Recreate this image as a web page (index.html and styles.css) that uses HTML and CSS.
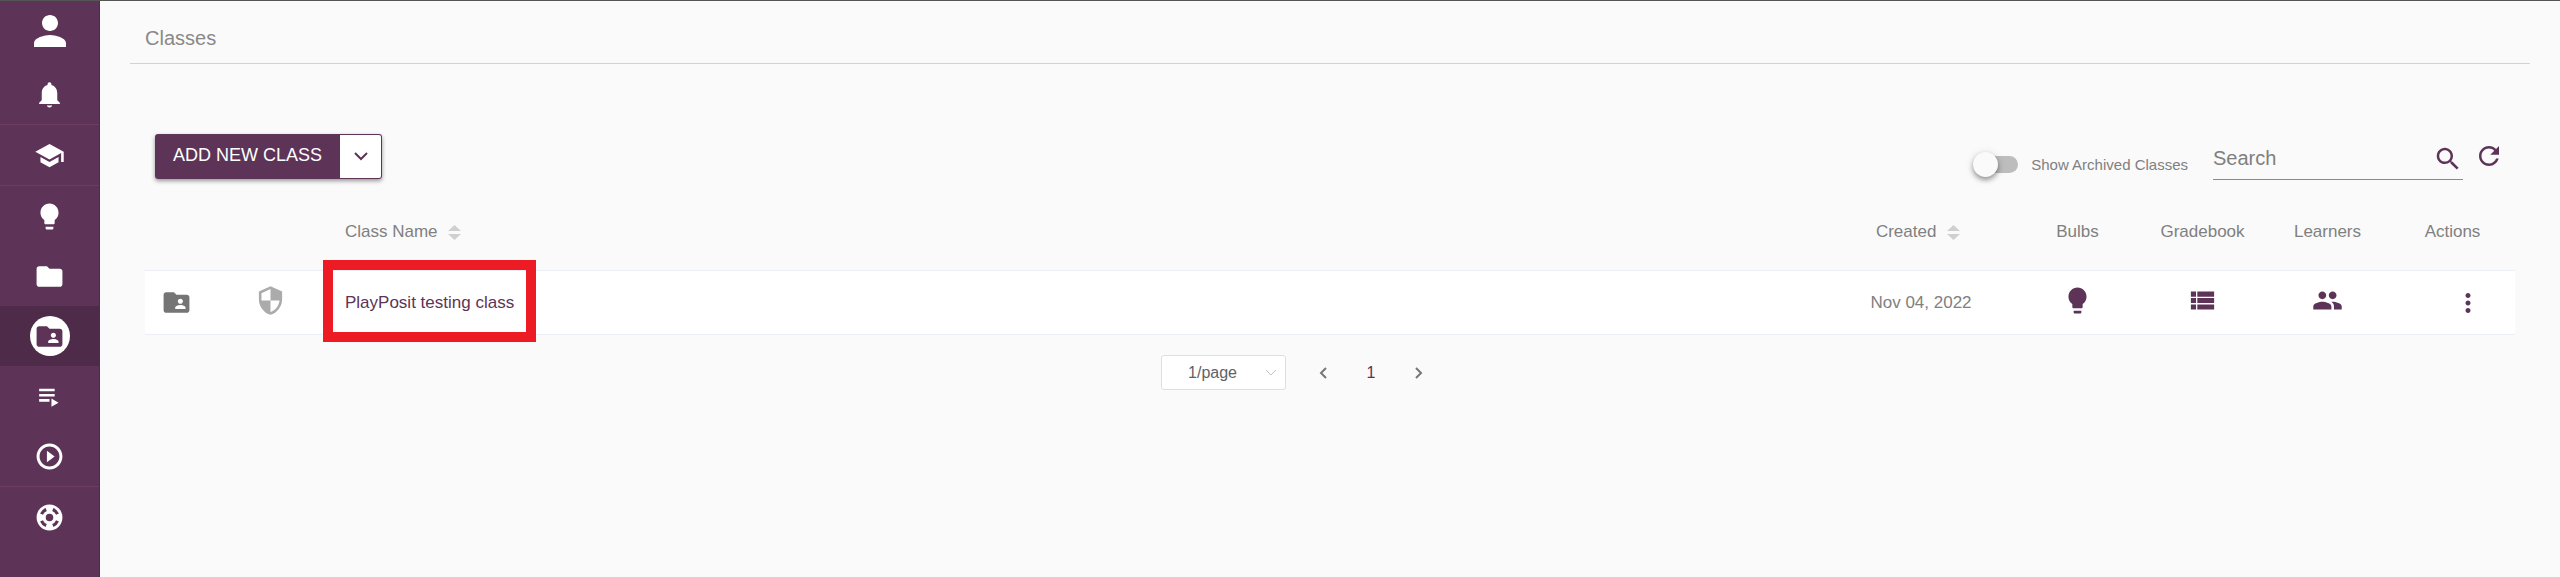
FILE: index.html
```
<!DOCTYPE html>
<html lang="en">

<head>
    <meta charset="UTF-8">
    <meta name="viewport" content="width=device-width, initial-scale=1.0">
    <title>Classes</title>
    <link rel="stylesheet" href="styles.css">
</head>

<body>
    <nav class="sidebar">
        <a class="nav-item nav-user" href="#" aria-label="Account">
            <svg class="icon-user" viewBox="0 0 24 24"><path d="M12 12c2.21 0 4-1.79 4-4s-1.79-4-4-4-4 1.79-4 4 1.79 4 4 4zm0 2c-2.67 0-8 1.34-8 4v2h16v-2c0-2.66-5.33-4-8-4z"/></svg>
        </a>
        <a class="nav-item divided" href="#" aria-label="Notifications">
            <svg class="icon" viewBox="0 0 24 24"><path d="M12 22c1.1 0 2-.7 2-1.4h-4c0 .7.89 1.4 2 1.4zm6-5.5V11c0-3.07-1.64-5.64-4.5-6.32V4c0-.83-.67-1.5-1.5-1.5s-1.5.67-1.5 1.5v.68C7.63 5.36 6 7.92 6 11v5.5l-2 1.8v1h16v-1z"/></svg>
        </a>
        <a class="nav-item divided" href="#" aria-label="Courses">
            <svg class="icon" viewBox="0 0 24 24"><path d="M5 13.18v4L12 21l7-3.82v-4L12 17l-7-3.82zM12 3L1 9l11 6 9-4.91V17h2V9L12 3z"/></svg>
        </a>
        <a class="nav-item" href="#" aria-label="Bulbs">
            <svg class="icon" viewBox="0 0 24 24"><path d="M9 21c0 .55.45 1 1 1h4c.55 0 1-.45 1-1v-1H9v1zm3-19C8.14 2 5 5.14 5 9c0 2.38 1.19 4.47 3 5.74V17c0 .55.45 1 1 1h6c.55 0 1-.45 1-1v-2.26c1.81-1.27 3-3.36 3-5.74 0-3.86-3.14-7-7-7z"/></svg>
        </a>
        <a class="nav-item" href="#" aria-label="Folders">
            <svg class="icon" viewBox="0 0 24 24"><path d="M10 4H4c-1.1 0-1.99.9-1.99 2L2 18c0 1.1.9 2 2 2h16c1.1 0 2-.9 2-2V8c0-1.1-.9-2-2-2h-8l-2-2z"/></svg>
        </a>
        <a class="nav-item active" href="#" aria-label="Classes">
            <span class="nav-circle">
                <svg class="icon" viewBox="0 0 24 24"><path d="M20 6h-8l-2-2H4c-1.1 0-1.99.9-1.99 2L2 18c0 1.1.9 2 2 2h16c1.1 0 2-.9 2-2V8c0-1.1-.9-2-2-2zm-5 3c1.1 0 2 .9 2 2s-.9 2-2 2-2-.9-2-2 .9-2 2-2zm4 8h-8v-1c0-1.33 2.67-2 4-2s4 .67 4 2v1z"/></svg>
            </span>
        </a>
        <a class="nav-item" href="#" aria-label="Playlists">
            <svg class="icon" viewBox="0 0 24 24"><path d="M4 10h12v2H4zM4 6h12v2H4zM4 14h8v2H4zM13.500 13.500v6.500l5.500-3.200z"/></svg>
        </a>
        <a class="nav-item divided" href="#" aria-label="Tutorials">
            <svg class="icon" viewBox="0 0 24 24"><path d="M10 16.500l6-4.500-6-4.500v9zM12 2C6.480 2 2 6.480 2 12s4.480 10 10 10 10-4.480 10-10S17.520 2 12 2zm0 17.700c-4.250 0-7.700-3.450-7.700-7.700S7.750 4.300 12 4.300s7.700 3.450 7.700 7.700-3.450 7.700-7.700 7.700z"/></svg>
        </a>
        <a class="nav-item" href="#" aria-label="Support">
            <svg class="icon" viewBox="0 0 24 24">
                <circle cx="12" cy="12" r="10"/>
                <circle class="ring" cx="12" cy="12" r="6.700" pathLength="80"/>
                <circle class="hole" cx="12" cy="12" r="2.900"/>
            </svg>
        </a>
    </nav>

    <main class="page">
        <h1 class="page-title">Classes</h1>

        <div class="content">
            <div class="toolbar">
                <div class="button-group">
                    <button class="add-button" type="button">ADD NEW CLASS</button>
                    <button class="more-button" type="button" aria-label="More options">
                        <svg class="chevron" viewBox="0 0 14 9"><path d="M1 1l6 6 6-6"/></svg>
                    </button>
                </div>

                <label class="archived">
                    <input class="switch" type="checkbox">
                    Show Archived Classes
                </label>
                <div class="search">
                    <input class="search-input" type="text" placeholder="Search" aria-label="Search">
                    <button class="icon-button" type="button" aria-label="Search">
                        <svg class="icon-tool" viewBox="0 0 24 24"><path d="M15.500 14h-.79l-.28-.27C15.410 12.590 16 11.110 16 9.500 16 5.910 13.090 3 9.500 3S3 5.910 3 9.500 5.910 16 9.500 16c1.610 0 3.090-.59 4.230-1.570l.27.28v.79l5 4.990L20.490 19l-4.990-5zm-6 0C7.010 14 5 11.990 5 9.500S7.010 5 9.500 5 14 7.010 14 9.500 11.990 14 9.500 14z"/></svg>
                    </button>
                </div>
                <button class="icon-button refresh" type="button" aria-label="Refresh">
                    <svg class="icon-tool" viewBox="0 0 24 24"><path d="M17.650 6.350C16.200 4.900 14.210 4 12 4c-4.420 0-7.990 3.580-7.990 8s3.570 8 7.990 8c3.730 0 6.840-2.550 7.730-6h-2.080c-.82 2.330-3.040 4-5.650 4-3.310 0-6-2.690-6-6s2.690-6 6-6c1.660 0 3.140.69 4.220 1.780L13 11h7V4l-2.350 2.350z"/></svg>
                </button>
            </div>

            <table class="classes">
                <colgroup>
                    <col class="col-type">
                    <col class="col-role">
                    <col>
                    <col class="col-created">
                    <col class="col-link">
                    <col class="col-link">
                    <col class="col-link">
                    <col class="col-link">
                </colgroup>
                <thead>
                    <tr>
                        <th></th>
                        <th></th>
                        <th>Class Name
                            <button class="sort" type="button" aria-label="Sort by class name">
                                <svg viewBox="0 0 13 16"><path d="M0 6l6.500-6L13 6zM0 9h13l-6.500 6z"/></svg>
                            </button>
                        </th>
                        <th class="center">Created
                            <button class="sort" type="button" aria-label="Sort by date">
                                <svg viewBox="0 0 13 16"><path d="M0 6l6.500-6L13 6zM0 9h13l-6.500 6z"/></svg>
                            </button>
                        </th>
                        <th class="center">Bulbs</th>
                        <th class="center">Gradebook</th>
                        <th class="center">Learners</th>
                        <th class="center">Actions</th>
                    </tr>
                </thead>
                <tbody>
                    <tr>
                        <td>
                            <svg class="icon type-icon" viewBox="0 0 24 24"><path d="M20 6h-8l-2-2H4c-1.1 0-1.99.9-1.99 2L2 18c0 1.1.9 2 2 2h16c1.1 0 2-.9 2-2V8c0-1.1-.9-2-2-2zm-5 3c1.1 0 2 .9 2 2s-.9 2-2 2-2-.9-2-2 .9-2 2-2zm4 8h-8v-1c0-1.33 2.67-2 4-2s4 .67 4 2v1z"/></svg>
                        </td>
                        <td class="raised">
                            <svg class="icon role-icon" viewBox="0 0 24 24"><path d="M12 1L3 5v6c0 5.550 3.840 10.740 9 12 5.160-1.260 9-6.450 9-12V5l-9-4zm0 10.990h7c-.53 4.120-3.280 7.790-7 8.940V12H5V6.300l7-3.110v8.800z"/></svg>
                        </td>
                        <td class="name-cell">
                            <a class="class-link" href="#">PlayPosit testing class</a>
                            <span class="highlight"></span>
                        </td>
                        <td class="center">Nov 04, 2022</td>
                        <td class="center raised">
                            <button class="icon-button" type="button" aria-label="Bulbs">
                                <svg class="icon" viewBox="0 0 24 24"><path d="M9 21c0 .55.45 1 1 1h4c.55 0 1-.45 1-1v-1H9v1zm3-19C8.14 2 5 5.14 5 9c0 2.38 1.19 4.47 3 5.74V17c0 .55.45 1 1 1h6c.55 0 1-.45 1-1v-2.26c1.81-1.27 3-3.36 3-5.74 0-3.86-3.14-7-7-7z"/></svg>
                            </button>
                        </td>
                        <td class="center raised">
                            <button class="icon-button" type="button" aria-label="Gradebook">
                                <svg class="icon" viewBox="0 0 24 24"><path d="M3 14h4v-4H3v4zm0 5h4v-4H3v4zM3 9h4V5H3v4zm5 5h13v-4H8v4zm0 5h13v-4H8v4zM8 5v4h13V5H8z"/></svg>
                            </button>
                        </td>
                        <td class="center raised">
                            <button class="icon-button" type="button" aria-label="Learners">
                                <svg class="icon" viewBox="0 0 24 24"><path d="M16 11c1.660 0 2.990-1.340 2.990-3S17.660 5 16 5c-1.660 0-3 1.340-3 3s1.340 3 3 3zm-8 0c1.660 0 2.990-1.340 2.990-3S9.660 5 8 5C6.340 5 5 6.340 5 8s1.340 3 3 3zm0 2c-2.330 0-7 1.170-7 3.500V19h14v-2.500c0-2.330-4.670-3.500-7-3.500zm8 0c-.29 0-.62.020-.97.050 1.160.84 1.970 1.970 1.970 3.450V19h6v-2.500c0-2.330-4.670-3.500-7-3.500z"/></svg>
                            </button>
                        </td>
                        <td class="center menu-cell">
                            <button class="icon-button" type="button" aria-label="Actions">
                                <svg class="icon-tool" viewBox="0 0 24 24"><path d="M12 8c1.100 0 2-.9 2-2s-.9-2-2-2-2 .9-2 2 .9 2 2 2zm0 2c-1.100 0-2 .9-2 2s.9 2 2 2 2-.9 2-2-.9-2-2-2zm0 6c-1.100 0-2 .9-2 2s.9 2 2 2 2-.9 2-2-.9-2-2-2z"/></svg>
                            </button>
                        </td>
                    </tr>
                </tbody>
            </table>

            <div class="pagination">
                <div class="page-size">
                    <select class="page-select" aria-label="Items per page">
                        <option>1/page</option>
                    </select>
                    <svg class="select-arrow" viewBox="0 0 12 8"><path d="M1 1l5 5 5-5"/></svg>
                </div>
                <button class="page-button" type="button" aria-label="Previous page">
                    <svg viewBox="0 0 8 12"><path d="M7 1L2 6l5 5"/></svg>
                </button>
                <button class="page-button current" type="button">1</button>
                <button class="page-button" type="button" aria-label="Next page">
                    <svg viewBox="0 0 8 12"><path d="M1 1l5 5-5 5"/></svg>
                </button>
            </div>
        </div>
    </main>
</body>

</html>
```

FILE: styles.css
```
* {
    box-sizing: border-box;
}

body {
    margin: 0;
    min-height: 100vh;
    display: flex;
    border-top: 1px solid #555;
    background: #fafafa;
    color: #808080;
    font-family: "Liberation Sans", Arial, sans-serif;
    font-size: 17px;
}

button, input, select {
    font-family: inherit;
    margin: 0;
    padding: 0;
}

button {
    border: none;
    background: none;
    cursor: pointer;
}

svg {
    display: block;
}

/* sidebar */
.sidebar {
    flex: none;
    width: 100px;
    background: #5d3457;
    border-right: 1px solid #4e2b49;
}

.nav-item {
    display: flex;
    align-items: center;
    justify-content: center;
    height: 60px;
    fill: #fff;
}

.nav-user {
    height: 63px;
    padding-bottom: 3px;
}

.divided {
    height: 61px;
    border-bottom: 1px solid #6e3d62;
}

.active {
    background: #4e2b49;
}

.nav-circle {
    display: flex;
    align-items: center;
    justify-content: center;
    width: 40px;
    height: 40px;
    border-radius: 50%;
    background: #fff;
    fill: #5d3457;
}

.icon {
    width: 31px;
    height: 31px;
}

.icon-user {
    width: 48px;
    height: 48px;
}

.icon-tool {
    width: 30px;
    height: 30px;
}

.ring {
    fill: none;
    stroke: #5d3457;
    stroke-width: 2.4;
    stroke-dasharray: 10 10;
    stroke-dashoffset: -5;
}

.hole {
    fill: #5d3457;
}

/* page */
.page {
    flex: 1;
    min-width: 0;
    padding: 0 30px;
}

.page-title {
    margin: 0 0 70px;
    padding: 26px 15px 14px;
    border-bottom: 1px solid #d3d3d3;
    font-size: 20px;
    font-weight: normal;
    line-height: 22px;
    color: #888;
}

.content {
    padding: 0 15px;
}

.toolbar {
    display: flex;
    align-items: flex-start;
    height: 46px;
    margin-bottom: 14px;
    padding: 0 11px 0 10px;
}

.button-group {
    display: flex;
    height: 45px;
    margin-right: auto;
    border-radius: 3px;
    box-shadow: 0 2px 4px rgba(0, 0, 0, 0.4);
}

.add-button {
    padding: 0 18px 2px;
    border-radius: 3px 0 0 3px;
    background: #5d3457;
    color: #fff;
    font-size: 18px;
}

.more-button {
    display: flex;
    align-items: center;
    justify-content: center;
    width: 42px;
    border: 1px solid #5d3457;
    border-left: none;
    border-radius: 0 3px 3px 0;
    background: #fff;
}

.chevron {
    width: 14px;
    height: 9px;
    fill: none;
    stroke: #5d3457;
    stroke-width: 2;
}

.archived {
    display: flex;
    align-items: center;
    align-self: flex-end;
    gap: 13px;
    height: 32px;
    margin-right: 25px;
    font-size: 15px;
}

.switch {
    appearance: none;
    display: flex;
    align-items: center;
    width: 45px;
    height: 17px;
    border-radius: 9px;
    background: #bdbdbd;
}

.switch::before {
    content: "";
    width: 25px;
    height: 25px;
    flex: none;
    border-radius: 50%;
    background: #fafafa;
    box-shadow: 0 3px 5px rgba(0, 0, 0, 0.35), 0 1px 10px rgba(0, 0, 0, 0.12);
}

.search {
    display: flex;
    align-items: center;
    width: 250px;
    height: 46px;
    margin-right: 11px;
    padding-top: 4px;
    border-bottom: 1px solid #8a8a8a;
}

.search-input {
    flex: 1;
    min-width: 0;
    border: none;
    outline: none;
    background: none;
    font-size: 20px;
}

.search-input::placeholder {
    color: #808080;
}

.icon-button {
    display: inline-block;
    vertical-align: middle;
    fill: #5d3457;
}

.refresh {
    height: 44px;
}

/* table */
.classes {
    width: 100%;
    table-layout: fixed;
    border-collapse: separate;
    border-spacing: 0;
}

.col-type {
    width: 94px;
}

.col-role {
    width: 90px;
}

.col-created {
    width: 188px;
}

.col-link {
    width: 125px;
}

th, td {
    padding: 0 16px;
    text-align: left;
    font-weight: normal;
    white-space: nowrap;
}

th {
    height: 76px;
}

td {
    height: 65px;
    background: #fff;
    border-top: 1px solid #ebeef5;
    border-bottom: 1px solid #ebeef5;
}

.center {
    text-align: center;
}

.raised {
    padding-bottom: 4px;
}

.sort {
    margin: 0 6px;
    vertical-align: middle;
    fill: #d0d0d0;
}

.sort svg {
    width: 13px;
    height: 16px;
}

.type-icon {
    fill: #757575;
}

.role-icon {
    fill: #ababab;
}

.name-cell {
    position: relative;
}

.class-link {
    color: #5d3457;
    text-decoration: none;
}

.highlight {
    position: absolute;
    top: -11px;
    left: -6px;
    width: 213px;
    height: 82px;
    border: 10px solid #ed1c24;
    pointer-events: none;
}

.menu-cell {
    padding: 0 0 0 30px;
}

/* pagination */
.pagination {
    display: flex;
    align-items: center;
    justify-content: center;
    padding: 20px 56px 0 0;
}

.page-size {
    position: relative;
    margin-right: 13px;
}

.page-select {
    appearance: none;
    display: block;
    width: 125px;
    height: 35px;
    padding-right: 22px;
    border: 1px solid #dcdfe6;
    border-radius: 3px;
    background: #fff;
    color: #606266;
    font-size: 16px;
    text-align: center;
}

.select-arrow {
    position: absolute;
    top: 14px;
    right: 9px;
    width: 12px;
    height: 8px;
    fill: none;
    stroke: #c0c4cc;
    pointer-events: none;
}

.page-button {
    display: flex;
    align-items: center;
    justify-content: center;
    width: 48px;
    height: 35px;
    font-size: 16px;
}

.page-button svg {
    width: 8px;
    height: 12px;
    fill: none;
    stroke: #777;
    stroke-width: 2;
}

.current {
    color: #5d3457;
}
```
